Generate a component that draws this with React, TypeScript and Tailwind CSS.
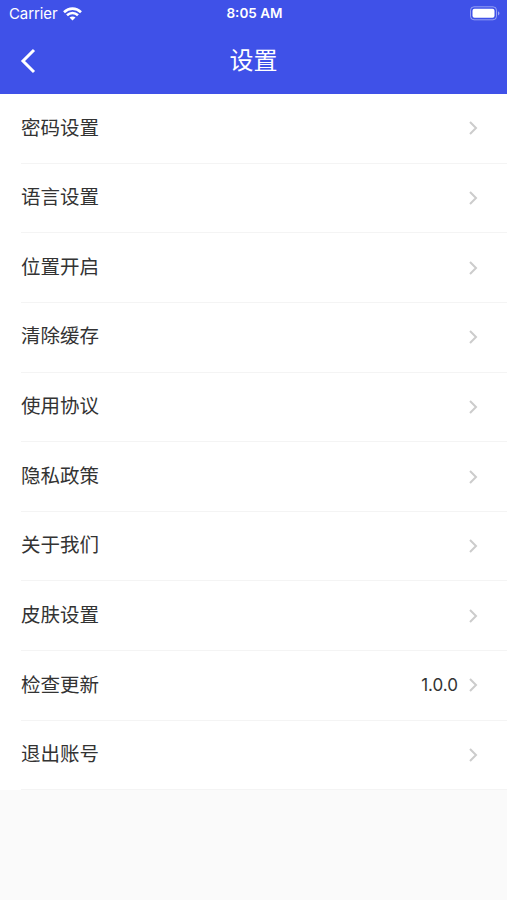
const rows = [
  { label: "密码设置" },
  { label: "语言设置" },
  { label: "位置开启" },
  { label: "清除缓存" },
  { label: "使用协议" },
  { label: "隐私政策" },
  { label: "关于我们" },
  { label: "皮肤设置" },
  { label: "检查更新", value: "1.0.0" },
  { label: "退出账号" },
];

function StatusBar() {
  return (
    <div className="grid h-[27px] grid-cols-3 items-center pr-[7px] pl-[9px] text-[15px] leading-[27px]">
      <div className="flex items-center gap-[6px]">
        <span className="tracking-[-0.1px]">Carrier</span>
        <svg className="h-[14px] w-[19px]" viewBox="0 0 19 14" fill="none" stroke="white" strokeWidth="2.6">
          <path d="M1 5.2C6 .4 13 .4 18 5.2M4 8.3C7.2 5.3 11.8 5.3 15 8.3" />
          <path d="M9.5 13.6 6.5 10.5C8.2 9 10.8 9 12.5 10.5Z" fill="white" stroke="none" />
        </svg>
      </div>
      <span className="text-center text-[13.5px] font-semibold">8:05 AM</span>
      <svg className="h-[15px] w-[30px] justify-self-end" viewBox="0 0 30 15">
        <rect x=".5" y=".8" width="26" height="13" rx="3.5" fill="none" stroke="white" strokeOpacity=".45" />
        <rect x="2.5" y="2.8" width="22" height="9" rx="2" fill="white" />
        <path d="M28 5.2c2 .8 2 3.4 0 4.2Z" fill="white" fillOpacity=".5" />
      </svg>
    </div>
  );
}

export default function App() {
  return (
    <div className="h-[900px] w-[507px] overflow-hidden bg-[#fafafa] font-['Inter','Noto_Sans_CJK_SC',sans-serif] text-[#333]">
      <header className="h-[94px] bg-[#3f51e8] text-white">
        <StatusBar />
        <div className="grid h-[67px] grid-cols-3 items-center pl-[20px] pr-[20px]">
          <svg className="h-[26px] w-[17px]" viewBox="0 0 17 26" fill="none" stroke="white" strokeWidth="3">
            <path d="M14 2 3 13l11 11" />
          </svg>
          <h1 className="text-center text-[24px] leading-none">设置</h1>
        </div>
      </header>
      <main className="bg-white">
        {rows.map((row) => (
          <div key={row.label} className="ml-[21px] flex h-[69.65px] items-center border-b border-[#f4f4f4] pr-[29px]">
            <span className="flex-1 text-[19.5px] leading-none">{row.label}</span>
            {row.value && <span className="mr-[11px] text-[17px] leading-none">{row.value}</span>}
            <svg className="h-[14px] w-[9px]" viewBox="0 0 9 14" fill="none" stroke="#ccc" strokeWidth="2">
              <path d="m1 1 6 6-6 6" />
            </svg>
          </div>
        ))}
      </main>
    </div>
  );
}
